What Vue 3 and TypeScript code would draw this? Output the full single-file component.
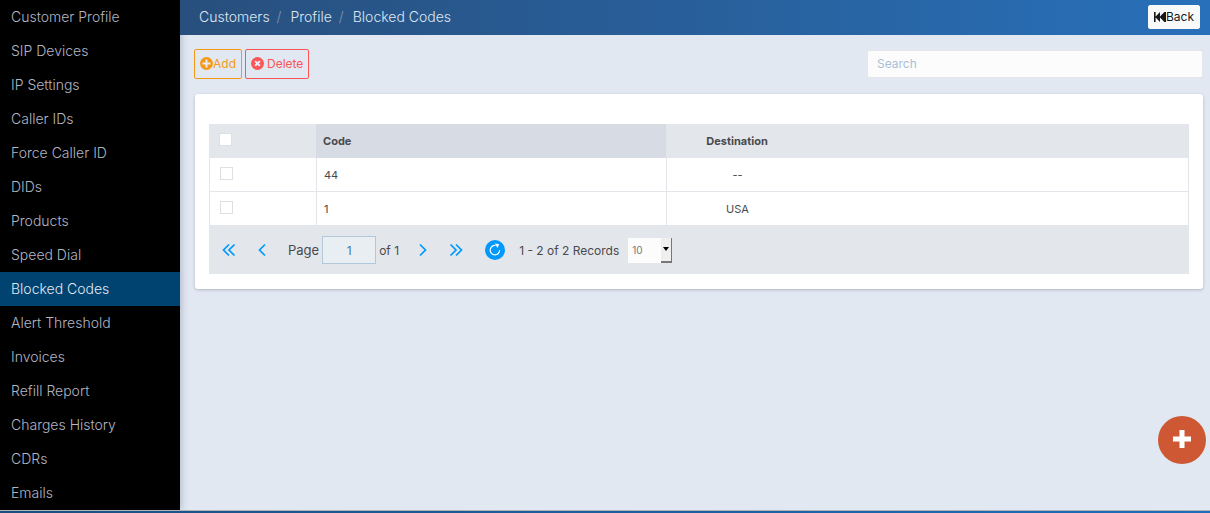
<script setup lang="ts">
import { computed, ref } from 'vue'

interface BlockedCode {
  code: string
  destination: string
}

const menu: string[] = [
  'Customer Profile', 'SIP Devices', 'IP Settings', 'Caller IDs', 'Force Caller ID',
  'DIDs', 'Products', 'Speed Dial', 'Blocked Codes', 'Alert Threshold', 'Invoices',
  'Refill Report', 'Charges History', 'CDRs', 'Emails',
]
const active = ref('Blocked Codes')
const crumbs: string[] = ['Customers', 'Profile', 'Blocked Codes']

const rows: BlockedCode[] = [
  { code: '44', destination: '--' },
  { code: '1', destination: 'USA' },
]
const selected = ref<string[]>([])
const allSelected = computed<boolean>({
  get: () => selected.value.length === rows.length,
  set: (on) => { selected.value = on ? rows.map((r) => r.code) : [] },
})
const search = ref('')
const page = ref('1')
const pageSize = ref('10')
</script>

<template>
  <div class="app">
    <div class="shell">
      <nav class="sidebar" aria-label="Customer">
        <a
          v-for="item in menu"
          :key="item"
          href="#"
          class="nav-item"
          :class="{ active: item === active }"
          @click.prevent="active = item"
        >{{ item }}</a>
      </nav>

      <div class="main">
        <header class="topbar">
          <ol class="crumbs">
            <li v-for="crumb in crumbs" :key="crumb"><a href="#">{{ crumb }}</a></li>
          </ol>
          <button type="button" class="back">
            <svg width="12" height="12" viewBox="0 0 12 12" aria-hidden="true">
              <path d="M0 1h1.6v4.6L6 1v4.6L10.400 1H12v10h-1.600L6 6.400V11L1.600 6.400V11H0z" fill="currentColor" />
            </svg>
            <span>Back</span>
          </button>
        </header>

        <main class="content">
          <div class="toolbar">
            <button type="button" class="btn add">
              <svg width="13" height="13" viewBox="0 0 13 13" aria-hidden="true">
                <circle cx="6.500" cy="6.500" r="6.500" fill="currentColor" />
                <path d="M6.500 2.500v8M2.500 6.500h8" class="cut" />
              </svg>
              <span>Add</span>
            </button>
            <button type="button" class="btn delete">
              <svg width="13" height="13" viewBox="0 0 13 13" aria-hidden="true">
                <circle cx="6.500" cy="6.500" r="6.500" fill="currentColor" />
                <path d="M4.100 4.100l4.800 4.800M8.900 4.100l-4.800 4.800" class="cut" />
              </svg>
              <span>Delete</span>
            </button>
            <input v-model="search" type="search" class="search" placeholder="Search" aria-label="Search" />
          </div>

          <section class="card">
            <table class="grid">
              <colgroup>
                <col class="c-check" />
                <col class="c-code" />
                <col class="c-dest" />
                <col />
              </colgroup>
              <thead>
                <tr>
                  <th><input v-model="allSelected" type="checkbox" aria-label="Select all" /></th>
                  <th class="sorted" scope="col">Code</th>
                  <th class="dest" scope="col">Destination</th>
                  <td></td>
                </tr>
              </thead>
              <tbody>
                <tr v-for="row in rows" :key="row.code">
                  <td><input v-model="selected" type="checkbox" :value="row.code" :aria-label="`Select ${row.code}`" /></td>
                  <td class="code">{{ row.code }}</td>
                  <td class="dest">{{ row.destination }}</td>
                  <td></td>
                </tr>
              </tbody>
            </table>

            <div class="pager">
              <button type="button" class="step" aria-label="First page">
                <svg width="14" height="14" viewBox="0 0 14 14"><path d="M7 1.500L1.500 7 7 12.500M12.500 1.500L7 7l5.500 5.500" /></svg>
              </button>
              <button type="button" class="step" aria-label="Previous page">
                <svg width="14" height="14" viewBox="0 0 14 14"><path d="M10 1.500L4.500 7l5.500 5.500" /></svg>
              </button>
              <label class="page">Page <input v-model="page" type="text" /></label>
              <span class="of">of 1</span>
              <button type="button" class="step" aria-label="Next page">
                <svg width="14" height="14" viewBox="0 0 14 14"><path d="M4 1.500L9.500 7 4 12.500" /></svg>
              </button>
              <button type="button" class="step" aria-label="Last page">
                <svg width="14" height="14" viewBox="0 0 14 14"><path d="M1.500 1.500L7 7l-5.500 5.500M7 1.500L12.500 7 7 12.500" /></svg>
              </button>
              <button type="button" class="reload" aria-label="Reload">
                <svg width="20" height="20" viewBox="0 0 20 20">
                  <circle cx="10" cy="10" r="10" fill="#0398fb" />
                  <path d="M10.500 5.500A4.700 4.700 0 1 0 14.600 10" fill="none" stroke="#fff" stroke-width="1.200" />
                  <path d="M9.800 3.600l4.400 0.600-1.600 3.800z" fill="#fff" />
                </svg>
              </button>
              <span class="records">1 - 2 of 2 Records</span>
              <span class="size">
                <select v-model="pageSize" aria-label="Records per page">
                  <option>10</option>
                  <option>25</option>
                  <option>50</option>
                </select>
                <span class="arrow" aria-hidden="true"></span>
              </span>
            </div>
          </section>
        </main>
      </div>
    </div>
    <footer class="strip"></footer>

    <button type="button" class="fab" aria-label="Add blocked code">
      <svg width="18" height="18" viewBox="0 0 18 18"><path d="M9 0v18M0 9h18" /></svg>
    </button>
  </div>
</template>

<style>
body {
  margin: 0;
  background: #e1e8f2;
}
</style>

<style scoped>
.app {
  min-height: 100vh;
  display: flex;
  flex-direction: column;
  font-family: Inter, "Open Sans", sans-serif;
  font-size: 13px;
  color: #4a4a4d;
}
.app *,
.app *::before {
  box-sizing: border-box;
}
button,
input,
select {
  font: inherit;
  color: inherit;
  margin: 0;
}
button {
  cursor: pointer;
}
a {
  color: inherit;
  text-decoration: none;
}
.shell {
  flex: 1;
  display: flex;
}
.sidebar {
  width: 180px;
  flex: none;
  background: #000;
  box-shadow: 0 0 8px rgba(40, 50, 80, 0.35);
}
.nav-item {
  display: block;
  padding-left: 11px;
  font-size: 14px;
  font-weight: 300;
  line-height: 34px;
  color: #b4b6c4;
}
.nav-item.active {
  background: #004370;
  color: #e3e8f0;
}
.main {
  flex: 1;
  min-width: 0;
  display: flex;
  flex-direction: column;
}
.topbar {
  height: 35px;
  display: flex;
  align-items: center;
  justify-content: space-between;
  padding: 0 10px 2px 19px;
  background: linear-gradient(90deg, #284f7d, #2870b9);
}
.crumbs {
  display: flex;
  margin: 0;
  padding: 0;
  list-style: none;
  font-size: 14px;
  font-weight: 300;
  color: #dfe7f2;
}
.crumbs li + li::before {
  content: "/";
  padding: 0 9px 0 7px;
  color: #8496ae;
}
.back {
  display: flex;
  align-items: center;
  height: 24px;
  padding: 0 5px;
  border: 1px solid #f8f9fa;
  border-radius: 2px;
  background: #f8f9fa;
  color: #16191c;
  font-size: 12px;
}
.content {
  flex: 1;
  padding: 14px 7px 20px 14px;
}
.toolbar {
  display: flex;
  align-items: center;
  gap: 3px;
  margin-bottom: 15px;
}
.btn {
  display: flex;
  align-items: center;
  height: 30px;
  padding: 0 5px 2px;
  border: 1px solid currentColor;
  border-radius: 2px;
  background: transparent;
  font-size: 12px;
}
.add {
  color: #f49917;
}
.delete {
  gap: 3px;
  color: #fb5555;
}
.cut {
  fill: none;
  stroke: #e9edf5;
  stroke-width: 2;
}
.search {
  width: 34%;
  max-width: 336px;
  height: 28px;
  margin-left: auto;
  padding: 0 9px 2px;
  border: 1px solid #e3e6ea;
  border-radius: 2px;
  background: #fcfcfd;
  font-size: 12px;
  outline: 0;
}
.search::placeholder {
  color: #a9bed6;
}
.card {
  margin-left: 1px;
  padding: 30px 14px 15px;
  border-radius: 3px;
  background: #fff;
  box-shadow: 0 1px 3px rgba(60, 70, 90, 0.3);
}
.grid {
  width: 100%;
  table-layout: fixed;
  border-collapse: separate;
  border-spacing: 0;
  border: solid #e3e5ea;
  border-width: 0 1px;
  font-size: 11px;
}
.c-check {
  width: 106px;
}
.c-code {
  width: 350px;
}
.c-dest {
  width: 142px;
}
.grid th,
.grid td {
  height: 34px;
  padding: 0 7px;
  text-align: left;
}
.grid thead {
  background: #e3e6eb;
}
.grid thead .sorted {
  background: #d7dbe3;
}
.grid tbody td {
  border-bottom: 1px solid #e3e5ea;
}
.grid tbody td:nth-child(2),
.grid tbody td:nth-child(3) {
  border-left: 1px solid #e3e5ea;
}
.grid .dest {
  text-align: center;
}
.grid th:first-child {
  padding-left: 9px;
}
.grid td:first-child {
  padding-left: 10px;
}
.grid input {
  display: block;
  width: 13px;
  height: 13px;
  margin-bottom: 3px;
  appearance: none;
  border: 1px solid #dddfe2;
  background: #fff;
}
.grid input:checked {
  background: #0398fb;
}
.pager {
  display: flex;
  align-items: center;
  height: 48px;
  padding-left: 13px;
  background: #e3e6eb;
}
.step,
.reload {
  display: flex;
  padding: 0;
  border: 0;
  background: none;
}
.step {
  margin-right: 19px;
}
.step path {
  fill: none;
  stroke: #0398fb;
  stroke-width: 1.7;
}
.page {
  display: flex;
  align-items: center;
  gap: 3px;
}
.page input {
  width: 54px;
  height: 28px;
  padding: 0;
  border: 1px solid #b0c8d9;
  background: #e9eef2;
  color: #4a7aa8;
  text-align: center;
  font-size: 12px;
}
.of {
  width: 40px;
  padding-left: 3px;
  font-size: 12px;
  white-space: nowrap;
}
.reload {
  margin: 0 14px 0 3px;
}
.records {
  width: 99px;
  margin-right: 10px;
  font-size: 12px;
  white-space: nowrap;
}
.size {
  display: flex;
  position: relative;
}
.size select {
  width: 44px;
  height: 25px;
  padding: 0 4px;
  appearance: none;
  border: 0;
  border-radius: 0;
  background: #fcfcfc;
  color: #777;
  font-size: 10px;
}
.arrow {
  position: absolute;
  top: 0;
  right: 0;
  display: flex;
  align-items: center;
  width: 11px;
  height: 25px;
  border: solid #777;
  border-width: 0 1px 2px 0;
  background: #efefef;
  pointer-events: none;
}
.arrow::before {
  content: "";
  margin-left: 2px;
  border: solid transparent;
  border-width: 4px 3px 0;
  border-top-color: #000;
}
.strip {
  height: 3px;
  border-top: 1px solid #b0b3b8;
  background: linear-gradient(90deg, #1c4f80, #1d6dba);
}
.fab {
  position: fixed;
  right: 4px;
  bottom: 49px;
  display: flex;
  align-items: center;
  justify-content: center;
  width: 48px;
  height: 48px;
  padding: 0 0 2px;
  border: 0;
  border-radius: 50%;
  background: #cf5834;
}
.fab path {
  fill: none;
  stroke: #fff;
  stroke-width: 5;
}
</style>
